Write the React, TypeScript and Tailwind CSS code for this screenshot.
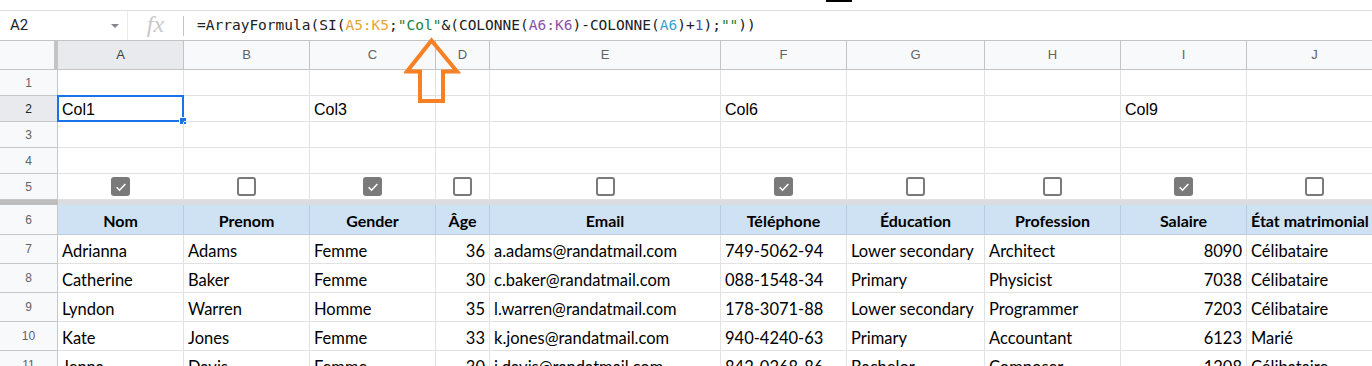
import React from 'react';

type Col = { id: string; w: string; num?: boolean; check: boolean };

const COLS: Col[] = [
  { id: 'A', w: 'w-[126px]', check: true },
  { id: 'B', w: 'w-[126px]', check: false },
  { id: 'C', w: 'w-[126px]', check: true },
  { id: 'D', w: 'w-[54px]', num: true, check: false },
  { id: 'E', w: 'w-[231px]', check: false },
  { id: 'F', w: 'w-[126px]', check: true },
  { id: 'G', w: 'w-[138px]', check: false },
  { id: 'H', w: 'w-[136px]', check: false },
  { id: 'I', w: 'w-[126px]', num: true, check: true },
  { id: 'J', w: 'w-[136px]', check: false },
];

const HEADERS = ['Nom', 'Prenom', 'Gender', 'Âge', 'Email', 'Téléphone', 'Éducation', 'Profession', 'Salaire', 'État matrimonial'];

const ROWS = [
  ['Adrianna', 'Adams', 'Femme', '36', 'a.adams@randatmail.com', '749-5062-94', 'Lower secondary', 'Architect', '8090', 'Célibataire'],
  ['Catherine', 'Baker', 'Femme', '30', 'c.baker@randatmail.com', '088-1548-34', 'Primary', 'Physicist', '7038', 'Célibataire'],
  ['Lyndon', 'Warren', 'Homme', '35', 'l.warren@randatmail.com', '178-3071-88', 'Lower secondary', 'Programmer', '7203', 'Célibataire'],
  ['Kate', 'Jones', 'Femme', '33', 'k.jones@randatmail.com', '940-4240-63', 'Primary', 'Accountant', '6123', 'Marié'],
  ['Jenna', 'Davis', 'Femme', '30', 'j.davis@randatmail.com', '842-0268-86', 'Bachelor', 'Composer', '1208', 'Célibataire'],
];

const ROW2: Record<string, string> = { A: 'Col1', C: 'Col3', F: 'Col6', I: 'Col9' };

function RowHead({ n, active }: { n: number; active?: boolean }) {
  return (
    <div
      className={`w-[58px] shrink-0 flex items-center justify-center border-r border-b border-[#c7c7c7] text-[12px] font-['Liberation_Sans',sans-serif] ${
        active ? 'bg-[#e8eaed] text-[#202124]' : 'bg-[#f8f9fa] text-[#5f6368]'
      }`}
    >
      {n}
    </div>
  );
}

function Checkbox({ checked }: { checked: boolean }) {
  if (checked) {
    return (
      <div className="w-[19px] h-[19px] rounded-[3px] bg-[#7a7a7a] flex items-center justify-center">
        <svg width="14" height="14" viewBox="0 0 24 24">
          <path d="M4.5 12.5l5 5L19.5 7" stroke="white" strokeWidth="2.6" fill="none" />
        </svg>
      </div>
    );
  }
  return <div className="w-[19px] h-[19px] rounded-[3px] border-2 border-[#7a7a7a] bg-white" />;
}

function Formula() {
  return (
    <span className="font-['DejaVu_Sans_Mono',monospace] text-[14.5px] text-[#202124] whitespace-pre">
      =ArrayFormula(SI(<span className="text-[#e8a33a]">A5:K5</span>;
      <span className="text-[#188038]">"Col"</span>&amp;(COLONNE(<span className="text-[#8a4fa8]">A6:K6</span>)-COLONNE(
      <span className="text-[#3aa3cc]">A6</span>)+<span className="text-[#5058b8]">1</span>);
      <span className="text-[#188038]">""</span>))
    </span>
  );
}

export default function App() {
  return (
    <div className="w-[1372px] h-[366px] overflow-hidden bg-white relative">
      {/* top strip */}
      <div className="h-[10px] flex">
        <div className="ml-[826px] w-[26px] h-[2px] bg-black" />
      </div>

      {/* formula bar */}
      <div className="h-[30px] flex items-center border-t border-[#e0e0e0]">
        <div className="w-[128px] h-full flex items-center justify-between pl-[10px] pr-[8px] border-r border-[#ebebeb]">
          <span className="font-['Roboto',sans-serif] text-[15px] text-[#202124]">A2</span>
          <svg width="8" height="4" viewBox="0 0 8 4">
            <path d="M0 0h8L4 4z" fill="#80868b" />
          </svg>
        </div>
        <div className="w-[55px] flex items-center justify-center">
          <span className="font-['Liberation_Serif',serif] italic text-[24px] text-[#c8c8c8] leading-none -mt-[3px]">fx</span>
        </div>
        <div className="w-px h-[20px] bg-[#c4c4c4]" />
        <div className="pl-[13px] flex whitespace-nowrap">
          <Formula />
        </div>
      </div>

      {/* column headers */}
      <div className="h-[30px] flex border-t border-b border-[#c4c4c4] bg-[#f8f9fa]">
        <div className="w-[58px] shrink-0 border-r-4 border-[#c4c4c4]" />
        {COLS.map((c) => (
          <div
            key={c.id}
            className={`${c.w} shrink-0 flex items-center justify-center border-r border-[#c4c4c4] font-['Liberation_Sans',sans-serif] text-[13px] ${
              c.id === 'A' ? 'bg-[#e8eaed] text-[#3c4043]' : 'text-[#5f6368]'
            }`}
          >
            {c.id}
          </div>
        ))}
      </div>

      {/* rows 1-5 */}
      {[1, 2, 3, 4, 5].map((n) => (
        <div key={n} className="h-[26px] flex">
          <RowHead n={n} active={n === 2} />
          {COLS.map((c) => (
            <div
              key={c.id}
              className={`${c.w} shrink-0 relative flex border-r border-b border-[#e2e2e2] font-['Liberation_Sans',sans-serif] text-[16px] leading-none text-[#000] ${
                n === 5 ? 'items-center justify-center' : 'items-end pl-[4px] pb-[3px]'
              }`}
            >
              {n === 2 && ROW2[c.id]}
              {n === 5 && <Checkbox checked={c.check} />}
              {n === 2 && c.id === 'A' && (
                <>
                  <div className="absolute -left-px -top-px right-[-1px] bottom-[-1px] border-2 border-[#1a73e8]" />
                  <div className="absolute -right-[4px] -bottom-[4px] w-[8px] h-[8px] bg-[#1a73e8] border border-white" />
                </>
              )}
            </div>
          ))}
        </div>
      ))}

      {/* frozen divider */}
      <div className="h-[5px] flex">
        <div className="w-[58px] bg-[#bdbdbd]" />
        <div className="flex-1 bg-[#dadce0]" />
      </div>

      {/* header row 6 */}
      <div className="h-[30px] flex">
        <RowHead n={6} />
        {COLS.map((c, i) => (
          <div
            key={c.id}
            className={`${c.w} shrink-0 flex items-center border-r border-b border-[#b8cde2] bg-[#cfe2f3] font-['Lato',sans-serif] font-bold text-[16px] text-[#000] whitespace-nowrap overflow-hidden pt-[3px] ${
              c.id === 'J' ? 'pl-[4px]' : 'justify-center'
            }`}
          >
            {HEADERS[i]}
          </div>
        ))}
      </div>

      {/* data rows */}
      {ROWS.map((r, ri) => (
        <div key={ri} className="h-[29px] flex">
          <RowHead n={ri + 7} />
          {COLS.map((c, i) => (
            <div
              key={c.id}
              className={`${c.w} shrink-0 flex items-center border-r border-b border-[#e2e2e2] font-['Lato',sans-serif] text-[16.5px] text-[#000] whitespace-nowrap overflow-hidden pt-[4px] ${
                c.num ? 'justify-end pr-[4px]' : 'pl-[4px]'
              }`}
            >
              {r[i]}
            </div>
          ))}
        </div>
      ))}

      {/* orange arrow */}
      <svg className="absolute left-[404px] top-[37px]" width="58" height="68" viewBox="0 0 58 68">
        <path
          d="M27.5 3.5 L53 34.5 L39 34.5 L39 64 L16 64 L16 34.5 L3 34.5 Z"
          fill="none"
          stroke="#f58025"
          strokeWidth="4"
          strokeLinejoin="miter"
        />
      </svg>
    </div>
  );
}
